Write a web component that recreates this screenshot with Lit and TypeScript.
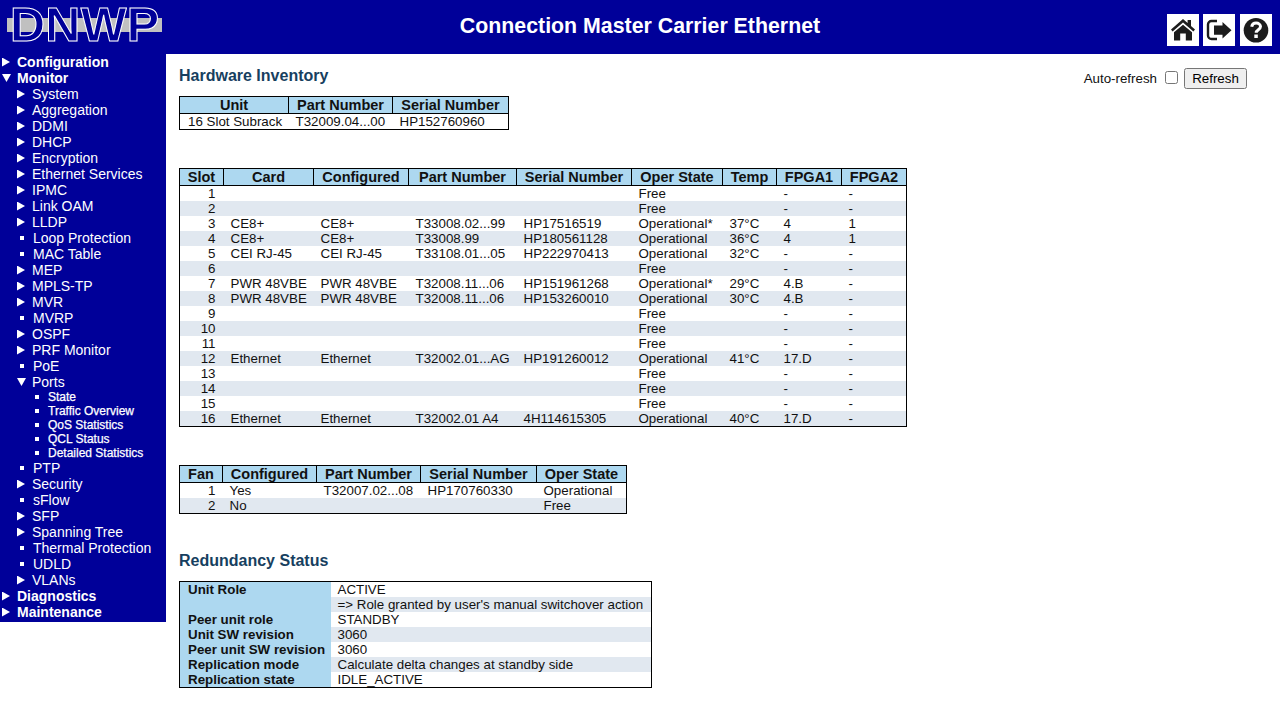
import { LitElement, html, css, svg } from "lit";
import { customElement } from "lit/decorators.js";

type Item = { t: string; k: "open" | "closed" | "leaf" | "sub" | "top-closed" | "top-open" };
const menu: Item[] = [
  { t: "Configuration", k: "top-closed" },
  { t: "Monitor", k: "top-open" },
  ...["System", "Aggregation", "DDMI", "DHCP", "Encryption", "Ethernet Services", "IPMC", "Link OAM", "LLDP"].map((t) => ({ t, k: "closed" as const })),
  { t: "Loop Protection", k: "leaf" },
  { t: "MAC Table", k: "leaf" },
  { t: "MEP", k: "closed" },
  { t: "MPLS-TP", k: "closed" },
  { t: "MVR", k: "closed" },
  { t: "MVRP", k: "leaf" },
  { t: "OSPF", k: "closed" },
  { t: "PRF Monitor", k: "closed" },
  { t: "PoE", k: "leaf" },
  { t: "Ports", k: "open" },
  ...["State", "Traffic Overview", "QoS Statistics", "QCL Status", "Detailed Statistics"].map((t) => ({ t, k: "sub" as const })),
  { t: "PTP", k: "leaf" },
  { t: "Security", k: "closed" },
  { t: "sFlow", k: "leaf" },
  { t: "SFP", k: "closed" },
  { t: "Spanning Tree", k: "closed" },
  { t: "Thermal Protection", k: "leaf" },
  { t: "UDLD", k: "leaf" },
  { t: "VLANs", k: "closed" },
  { t: "Diagnostics", k: "top-closed" },
  { t: "Maintenance", k: "top-closed" },
];

const slots: string[][] = [
  ["1", "", "", "", "", "Free", "", "-", "-"],
  ["2", "", "", "", "", "Free", "", "-", "-"],
  ["3", "CE8+", "CE8+", "T33008.02...99", "HP17516519", "Operational*", "37°C", "4", "1"],
  ["4", "CE8+", "CE8+", "T33008.99", "HP180561128", "Operational", "36°C", "4", "1"],
  ["5", "CEI RJ-45", "CEI RJ-45", "T33108.01...05", "HP222970413", "Operational", "32°C", "-", "-"],
  ["6", "", "", "", "", "Free", "", "-", "-"],
  ["7", "PWR 48VBE", "PWR 48VBE", "T32008.11...06", "HP151961268", "Operational*", "29°C", "4.B", "-"],
  ["8", "PWR 48VBE", "PWR 48VBE", "T32008.11...06", "HP153260010", "Operational", "30°C", "4.B", "-"],
  ["9", "", "", "", "", "Free", "", "-", "-"],
  ["10", "", "", "", "", "Free", "", "-", "-"],
  ["11", "", "", "", "", "Free", "", "-", "-"],
  ["12", "Ethernet", "Ethernet", "T32002.01...AG", "HP191260012", "Operational", "41°C", "17.D", "-"],
  ["13", "", "", "", "", "Free", "", "-", "-"],
  ["14", "", "", "", "", "Free", "", "-", "-"],
  ["15", "", "", "", "", "Free", "", "-", "-"],
  ["16", "Ethernet", "Ethernet", "T32002.01 A4", "4H114615305", "Operational", "40°C", "17.D", "-"],
];

const redundancy: [string, string][] = [
  ["Unit Role", "ACTIVE"],
  ["", "=> Role granted by user's manual switchover action"],
  ["Peer unit role", "STANDBY"],
  ["Unit SW revision", "3060"],
  ["Peer unit SW revision", "3060"],
  ["Replication mode", "Calculate delta changes at standby side"],
  ["Replication state", "IDLE_ACTIVE"],
];

const homeIcon = svg`<path d="M16 5 4 15.500l1.600 1.900L16 8.500l10.400 8.900L28 15.500l-4-3.500V6h-3.400v3z" fill="#1c1c1c"/><path d="M16 10.700 7 18.300V26.500h6.200v-7h5.600v7H25v-8.200z" fill="#1c1c1c"/>`;
const outIcon = svg`<path d="M14 7H8.500A3.500 3.500 0 0 0 5 10.500v11A3.500 3.500 0 0 0 8.500 25H14" fill="none" stroke="#1c1c1c" stroke-width="2.400"/><path d="M11 11.500h8.500V8L28.500 16.200 19.500 24.500v-3.800H11z" fill="#1c1c1c"/>`;
const helpIcon = svg`<circle cx="16" cy="16.300" r="12.300" fill="#1c1c1c"/><path d="M11.700 12.800c.4-2.500 2.200-3.700 4.400-3.700 2.500 0 4.400 1.400 4.400 3.500 0 3.200-4.300 3.100-4.300 6.200" fill="none" stroke="#fff" stroke-width="3"/><rect x="14.300" y="20.500" width="3.500" height="3.500" fill="#fff"/>`;

@customElement("app-root")
export class AppRoot extends LitElement {
  static styles = css`
    :host {
      display: block;
      font-family: "Liberation Sans", Arial, sans-serif;
      font-size: 13.333px;
      color: #111;
    }
    .header {
      display: grid;
      grid-template-columns: 1fr auto 1fr;
      align-items: center;
      height: 54px;
      background: #000099;
    }
    .logo {
      display: block;
      width: 170px;
      height: 54px;
    }
    .logo rect {
      fill: #c0c0c0;
    }
    .logo text {
      font-family: "Liberation Sans", Arial, sans-serif;
      font-size: 48.500px;
      font-weight: bold;
      letter-spacing: 0.3px;
      fill: #000099;
      stroke: #fff;
      stroke-width: 1px;
    }
    .title {
      color: #fff;
      font-size: 21.333px;
      font-weight: bold;
      line-height: 24px;
      margin-top: -3px;
    }
    .icons {
      display: flex;
      justify-content: flex-end;
      gap: 4px;
      padding-right: 8px;
      padding-top: 5px;
    }
    .icon {
      display: block;
      width: 32px;
      height: 32px;
      background: #fff;
    }
    .icon.last {
      margin-left: 1px;
    }
    .body {
      display: flex;
      align-items: flex-start;
    }
    .side {
      flex: none;
      width: 166px;
      background: #000099;
      padding-bottom: 2px;
      color: #fff;
    }
    .row {
      display: flex;
      align-items: center;
      height: 16px;
      font-size: 14px;
      line-height: 16px;
      white-space: nowrap;
    }
    .row i {
      flex: none;
      display: block;
    }
    .tri-r {
      width: 8px;
      height: 9px;
      background: #fff;
      clip-path: polygon(0 0, 100% 50%, 0 100%);
    }
    .tri-d {
      width: 9px;
      height: 8px;
      background: #fff;
      clip-path: polygon(0 0, 100% 0, 50% 100%);
    }
    .sq {
      width: 4px;
      height: 4px;
      background: #fff;
    }
    .row.top {
      font-weight: bold;
      padding-left: 2px;
    }
    .row.top i {
      margin-right: 7px;
    }
    .row.top i.tri-d {
      margin-right: 6px;
    }
    .row.mid {
      padding-left: 17px;
    }
    .row.mid i {
      margin-right: 7px;
    }
    .row.mid i.tri-d {
      margin-right: 6px;
    }
    .row.leaf {
      padding-left: 20px;
    }
    .row.leaf i {
      margin-right: 9px;
    }
    .row.sub {
      height: 14px;
      line-height: 14px;
      font-size: 12px;
      -webkit-text-stroke: 0.25px #fff;
      padding-left: 35px;
    }
    .row.sub i {
      margin-right: 9px;
    }
    .main {
      flex: 1;
      min-width: 0;
      padding: 13px 33px 0 13px;
    }
    .top-row {
      display: flex;
      justify-content: space-between;
      align-items: flex-start;
    }
    h1 {
      margin: 0;
      font-size: 16px;
      line-height: 18px;
      font-weight: bold;
      color: #173f5f;
    }
    .ctl {
      display: flex;
      align-items: center;
      height: 25px;
      margin-top: -1px;
    }
    .ctl span {
      margin-right: 8px;
    }
    .ctl input {
      margin: 0 6px 2px 0;
      width: 13px;
      height: 13px;
    }
    .ctl button {
      width: 63px;
      height: 21px;
      padding: 0;
      font: 13.333px "Liberation Sans", Arial, sans-serif;
      margin: 0;
    }
    table {
      border-collapse: collapse;
      table-layout: fixed;
      border: 1px solid #000;
      white-space: nowrap;
    }
    th {
      height: 16px;
      padding: 0;
      font-size: 14.500px;
      line-height: 16px;
      font-weight: bold;
      text-align: center;
      background: #add8f0;
      border: 1px solid #000;
      box-sizing: content-box;
    }
    td {
      height: 15px;
      padding: 0 7px;
      line-height: 15px;
      font-size: 13.333px;
      overflow: hidden;
    }
    tr.even td {
      background: #e1e8f0;
    }
    td.num {
      text-align: right;
    }
    .t1 {
      margin-top: 5px;
    }
    .t1 td:first-child {
      padding-left: 8px;
    }
    .t2,
    .t3 {
      margin-top: 38px;
    }
    .t2 td.num {
      padding-right: 8px;
    }
    h1.red {
      margin-top: 38px;
    }
    .t4 {
      margin-top: 11px;
    }
    .t4 td.lab,
    .t4 tr.even td.lab {
      background: #add8f0;
      font-weight: bold;
      padding-left: 8px;
    }
  `;

  private table(cls: string, widths: number[], heads: string[], rows: string[][], num: number) {
    const total = widths.reduce((a, b) => a + b, 0) + 1;
    return html`<table class=${cls} style="width:${total}px">
      <colgroup>${widths.map((w) => html`<col style="width:${w}px" />`)}</colgroup>
      <thead><tr>${heads.map((h) => html`<th>${h}</th>`)}</tr></thead>
      <tbody>
        ${rows.map(
          (r, i) => html`<tr class=${i % 2 ? "even" : ""}>
            ${r.map((c, j) => html`<td class=${j === num ? "num" : ""}>${c}</td>`)}
          </tr>`
        )}
      </tbody>
    </table>`;
  }

  private item(m: Item) {
    const cls =
      m.k === "top-closed" || m.k === "top-open" ? "top" : m.k === "sub" ? "sub" : m.k === "leaf" ? "leaf" : "mid";
    const mark = m.k === "open" || m.k === "top-open" ? "tri-d" : m.k === "leaf" || m.k === "sub" ? "sq" : "tri-r";
    return html`<div class="row ${cls}"><i class=${mark}></i><span>${m.t}</span></div>`;
  }

  render() {
    return html`
      <div class="header">
        <svg class="logo" viewBox="0 0 170 54">
          <rect x="7" y="18" width="155" height="14"></rect>
          <text x="10" y="41">DNWP</text>
        </svg>
        <div class="title">Connection Master Carrier Ethernet</div>
        <div class="icons">
          <svg class="icon" viewBox="0 0 32 32">${homeIcon}</svg>
          <svg class="icon" viewBox="0 0 32 32">${outIcon}</svg>
          <svg class="icon last" viewBox="0 0 32 32">${helpIcon}</svg>
        </div>
      </div>
      <div class="body">
        <nav class="side">${menu.map((m) => this.item(m))}</nav>
        <div class="main">
          <div class="top-row">
            <h1>Hardware Inventory</h1>
            <div class="ctl">
              <span>Auto-refresh</span><input type="checkbox" /><button>Refresh</button>
            </div>
          </div>
          ${this.table("t1", [109, 104, 116], ["Unit", "Part Number", "Serial Number"], [["16 Slot Subrack", "T32009.04...00", "HP152760960"]], -1)}
          ${this.table(
            "t2",
            [44, 90, 95, 108, 115, 91, 54, 65, 65],
            ["Slot", "Card", "Configured", "Part Number", "Serial Number", "Oper State", "Temp", "FPGA1", "FPGA2"],
            slots,
            0
          )}
          ${this.table(
            "t3",
            [43, 94, 104, 116, 90],
            ["Fan", "Configured", "Part Number", "Serial Number", "Oper State"],
            [
              ["1", "Yes", "T32007.02...08", "HP170760330", "Operational"],
              ["2", "No", "", "", "Free"],
            ],
            0
          )}
          <h1 class="red">Redundancy Status</h1>
          <table class="t4" style="width:473px">
            <colgroup><col style="width:151px" /><col style="width:321px" /></colgroup>
            <tbody>
              ${redundancy.map(
                ([a, b], i) => html`<tr class=${i % 2 ? "even" : ""}><td class="lab">${a}</td><td>${b}</td></tr>`
              )}
            </tbody>
          </table>
        </div>
      </div>
    `;
  }
}
